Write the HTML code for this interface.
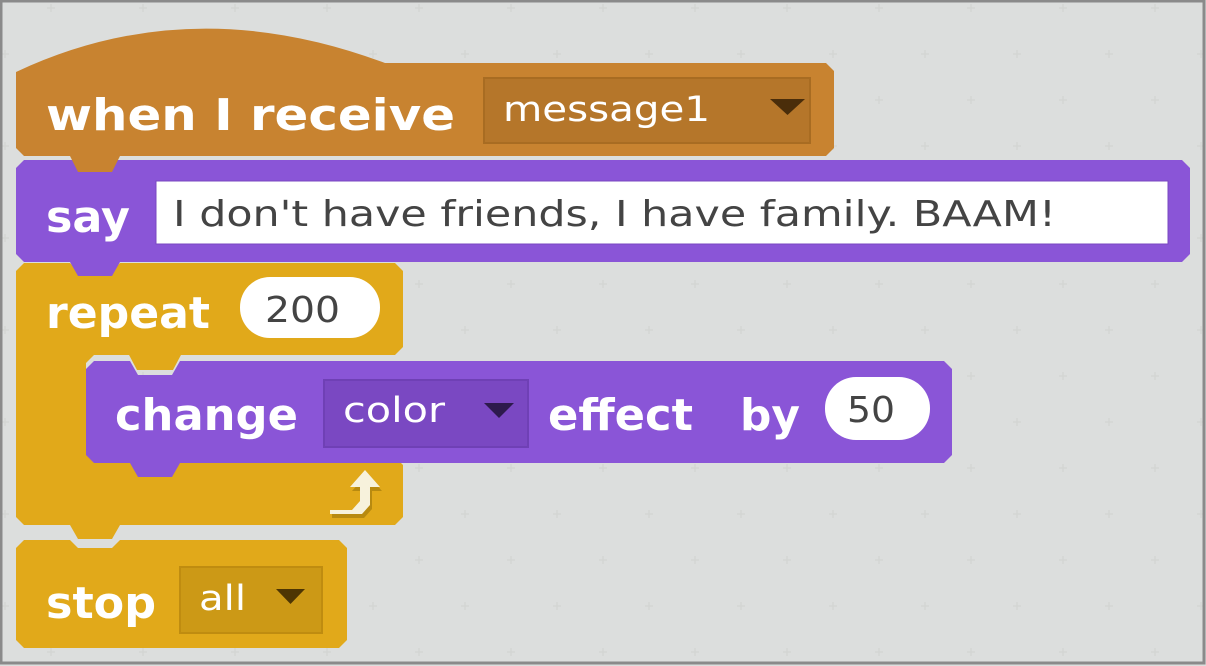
<!DOCTYPE html>
<html><head><meta charset="utf-8"><style>
html,body{margin:0;padding:0;width:1206px;height:666px;overflow:hidden;background:#dcdedd}
svg{display:block}
.lb{font-family:"DejaVu Sans","Liberation Sans",sans-serif;font-weight:bold;font-size:44px;fill:#fff}
.in{font-family:"DejaVu Sans","Liberation Sans",sans-serif;font-size:35px;fill:#fff}
.dk{font-family:"DejaVu Sans","Liberation Sans",sans-serif;font-size:36px;fill:#444}
</style></head><body>
<svg width="1206" height="666" viewBox="0 0 1206 666">
<defs>
<pattern id="g" width="92" height="92" patternUnits="userSpaceOnUse" x="0" y="0">
<path d="M51 4v8M47 8h8M5 50v8M1 54h8" stroke="#d3d5d4" stroke-width="1.5"/>
</pattern>
</defs>
<rect width="1206" height="666" fill="#dcdedd"/>
<rect width="1206" height="666" fill="url(#g)"/>
<rect x="1" y="1" width="1203" height="662" fill="none" stroke="#8a8a8a" stroke-width="3"/>

<!-- stop block -->
<path d="M24 540H70l8 8h34l8-8H339l8 8v92l-8 8H24l-8-8V548z" fill="#e1a91a"/>
<rect x="180" y="567" width="142" height="66" fill="#cc9916" stroke="#bf8c10" stroke-width="2"/>
<text class="lb" x="46" y="618" textLength="110" lengthAdjust="spacingAndGlyphs">stop</text>
<text class="in" x="199" y="610" textLength="47" lengthAdjust="spacingAndGlyphs">all</text>
<path d="M276 589h29l-14.5 15z" fill="#4d3503"/>

<!-- repeat C -->
<path d="M24 263H70l8 8h34l8-8H395l8 8v76l-8 8H180l-8 14h-34l-8-14H94l-8 8v86l8 8H395l8 8v52l-8 8H120l-8 14H78l-8-14H24l-8-8V271z" fill="#e1a91a"/>
<rect x="240" y="277" width="140" height="61" rx="30" fill="#fff"/>
<text class="lb" x="46" y="328" textLength="164" lengthAdjust="spacingAndGlyphs">repeat</text>
<text class="dk" x="265" y="322" textLength="75" lengthAdjust="spacingAndGlyphs">200</text>
<path d="M332 514h22l8-9v-14h-10l15-17 15 17h-10v18l-8 9h-32z" fill="#b88a10"/>
<path d="M330 510h22l8-9v-14h-10l15-17 15 17h-10v18l-8 9h-32z" fill="#f7f2dc"/>

<!-- change block -->
<path d="M94 361H130l8 14h34l8-14H944l8 8v86l-8 8H180l-8 14h-34l-8-14H94l-8-8v-86z" fill="#8a55d7"/>
<path d="M128 353l9 17h36l9-17z" fill="#e1a91a"/>
<rect x="324" y="380" width="204" height="67" fill="#7a48c2" stroke="#6f40b5" stroke-width="2"/>
<rect x="825" y="377" width="105" height="63" rx="31" fill="#fff"/>
<text class="lb" x="115" y="430" textLength="183" lengthAdjust="spacingAndGlyphs">change</text>
<text class="in" x="343" y="422" textLength="102" lengthAdjust="spacingAndGlyphs">color</text>
<path d="M484 403h30l-15 15z" fill="#2d1a4d"/>
<text class="lb" x="548" y="430" textLength="145" lengthAdjust="spacingAndGlyphs">effect</text>
<text class="lb" x="740" y="430" textLength="60" lengthAdjust="spacingAndGlyphs">by</text>
<text class="dk" x="847" y="422" textLength="48" lengthAdjust="spacingAndGlyphs">50</text>

<!-- say block -->
<path d="M24 160H1182l8 8v86l-8 8H120l-8 14H78l-8-14H24l-8-8V168z" fill="#8a55d7"/>
<rect x="156" y="181" width="1012" height="63" fill="#fff" stroke="#7a48c2" stroke-width="1"/>
<text class="lb" x="46" y="232" textLength="84" lengthAdjust="spacingAndGlyphs">say</text>
<text class="dk" x="173" y="226" textLength="883" lengthAdjust="spacingAndGlyphs">I don't have friends, I have family. BAAM!</text>

<!-- hat block -->
<path d="M16 72Q190 -10 385 63H826l8 8v77l-8 8H120l-8 16H78l-8-16H24l-8-8z" fill="#c88330"/>
<rect x="484" y="78" width="326" height="65" fill="#b5762a" stroke="#a86c22" stroke-width="2"/>
<text class="lb" x="46" y="130" textLength="409" lengthAdjust="spacingAndGlyphs">when I  receive</text>
<text class="in" x="503" y="121" textLength="207" lengthAdjust="spacingAndGlyphs">message1</text>
<path d="M770 99h35l-17.5 16z" fill="#4a2d0a"/>
</svg>
</body></html>
